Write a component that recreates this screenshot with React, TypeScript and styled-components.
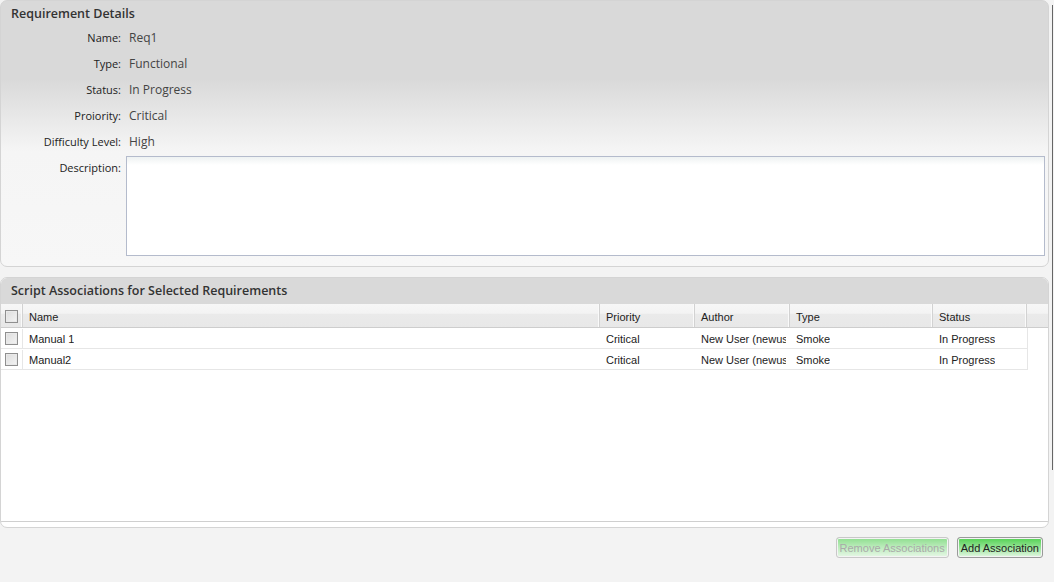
import { createGlobalStyle, styled } from 'styled-components';

const GlobalStyle = createGlobalStyle`
  html, body {
    margin: 0;
    padding: 0;
    background: #f3f3f3;
  }
  body {
    width: 1054px;
    height: 582px;
    overflow: hidden;
  }
`;

interface FieldRow {
  label: string;
  value: string;
}

interface Script {
  name: string;
  priority: string;
  author: string;
  type: string;
  status: string;
}

const fields: FieldRow[] = [
  { label: 'Name:', value: 'Req1' },
  { label: 'Type:', value: 'Functional' },
  { label: 'Status:', value: 'In Progress' },
  { label: 'Proiority:', value: 'Critical' },
  { label: 'Difficulty Level:', value: 'High' },
];

const scripts: Script[] = [
  { name: 'Manual 1', priority: 'Critical', author: 'New User (newuser)', type: 'Smoke', status: 'In Progress' },
  { name: 'Manual2', priority: 'Critical', author: 'New User (newuser)', type: 'Smoke', status: 'In Progress' },
];

const COLUMNS = '22px 577px 95px 95px 143px 94px 1fr';

const App = () => (
  <Page>
    <GlobalStyle />
    <DetailsPanel>
      <PanelTitle>Requirement Details</PanelTitle>
      <Form>
        {fields.map((f) => (
          <FormRow key={f.label}>
            <Label>{f.label}</Label>
            <Value>{f.value}</Value>
          </FormRow>
        ))}
        <DescriptionRow>
          <Label $top>Description:</Label>
          <Description />
        </DescriptionRow>
      </Form>
    </DetailsPanel>

    <GridPanel>
      <GridTitle>Script Associations for Selected Requirements</GridTitle>
      <Grid>
        <HeaderRow>
          <HeaderCell $check>
            <Checkbox />
          </HeaderCell>
          <HeaderCell>Name</HeaderCell>
          <HeaderCell>Priority</HeaderCell>
          <HeaderCell>Author</HeaderCell>
          <HeaderCell>Type</HeaderCell>
          <HeaderCell>Status</HeaderCell>
          <HeaderCell $last />
        </HeaderRow>
        {scripts.map((s) => (
          <BodyRow key={s.name}>
            <Cell $check>
              <Checkbox />
            </Cell>
            {[s.name, s.priority, s.author, s.type, s.status].map((text, i) => (
              <Cell key={i}>
                <CellText>{text}</CellText>
              </Cell>
            ))}
          </BodyRow>
        ))}
      </Grid>
    </GridPanel>

    <Actions>
      <Button disabled>Remove Associations</Button>
      <Button>Add Association</Button>
    </Actions>
    <ScrollEdge />
  </Page>
);

const Page = styled.div`
  width: 1049px;
  display: flex;
  flex-direction: column;
  font-family: 'Open Sans', 'Liberation Sans', sans-serif;
`;

const DetailsPanel = styled.section`
  height: 267px;
  box-sizing: border-box;
  border: 1px solid #d4d4d4;
  border-radius: 7px;
  background: linear-gradient(#d9d9d9 0px, #d9d9d9 78px, #f5f5f5 150px, #f7f7f7 100%);
  padding: 0 3px 10px 0;
  display: flex;
  flex-direction: column;
`;

const PanelTitle = styled.h2`
  margin: 0;
  height: 23px;
  line-height: 25px;
  padding-left: 10px;
  font-size: 12.5px;
  font-weight: 600;
  color: #333;
`;

const Form = styled.div`
  display: flex;
  flex-direction: column;
`;

const FormRow = styled.div`
  display: grid;
  grid-template-columns: 120px 1fr;
  column-gap: 5px;
  height: 26px;
  align-items: center;
`;

const Label = styled.span<{ $top?: boolean }>`
  text-align: right;
  font-size: 11px;
  color: #222;
  align-self: ${({ $top }) => ($top ? 'start' : 'center')};
  padding-top: ${({ $top }) => ($top ? '4px' : '0')};
`;

const Value = styled.span`
  padding-left: 3px;
  font-size: 12px;
  color: #444;
`;

const DescriptionRow = styled.div`
  display: grid;
  grid-template-columns: 120px 1fr;
  column-gap: 5px;
  margin-top: 2px;
`;

const Description = styled.div`
  height: 98px;
  border: 1px solid #b4bbcc;
  background: linear-gradient(#eef2f2 0px, #ffffff 8px);
`;

const GridPanel = styled.section`
  margin-top: 10px;
  height: 251px;
  box-sizing: border-box;
  border: 1px solid #d4d4d4;
  border-radius: 7px;
  overflow: hidden;
  background: #fff;
  display: flex;
  flex-direction: column;
  padding-bottom: 5px;
`;

const GridTitle = styled.h2`
  margin: 0;
  height: 26px;
  line-height: 25px;
  padding-left: 10px;
  background: #d9d9d9;
  font-size: 12.5px;
  font-weight: 600;
  color: #333;
  flex: none;
`;

const Grid = styled.div`
  flex: 1;
  border-bottom: 1px solid #cfcfcf;
  font-family: 'Liberation Sans', Arial, sans-serif;
  font-size: 11px;
  color: #222;
`;

const HeaderRow = styled.div`
  display: grid;
  grid-template-columns: ${COLUMNS};
  height: 24px;
  box-sizing: border-box;
  padding-top: 2px;
  border-bottom: 1px solid #cdcdcd;
  background: linear-gradient(#f7f7f7 0%, #f3f3f3 40%, #eaeaea 45%, #e8e8e8 100%);
`;

const HeaderCell = styled.div<{ $check?: boolean; $last?: boolean }>`
  display: flex;
  align-items: center;
  justify-content: ${({ $check }) => ($check ? 'center' : 'flex-start')};
  padding-left: ${({ $check }) => ($check ? '0' : '6px')};
  margin-top: -2px;
  padding-top: 2px;
  border-right: ${({ $last }) => ($last ? 'none' : '1px solid #d2d2d2')};
  box-shadow: ${({ $last }) => ($last ? 'none' : 'inset -1px 0 0 #fafafa')};
  overflow: hidden;
  white-space: nowrap;
`;

const BodyRow = styled.div`
  display: grid;
  grid-template-columns: 22px 577px 95px 95px 143px 94px;
  width: 1027px;
  height: 21px;
  box-sizing: border-box;
  padding-top: 1px;
  border-bottom: 1px solid #e6e6e6;
  border-right: 1px solid #e6e6e6;
`;

const Cell = styled.div<{ $check?: boolean }>`
  display: flex;
  align-items: center;
  justify-content: ${({ $check }) => ($check ? 'center' : 'flex-start')};
  padding-left: ${({ $check }) => ($check ? '0' : '6px')};
  padding-right: ${({ $check }) => ($check ? '0' : '4px')};
  border-right: ${({ $check }) => ($check ? '1px solid #e6e6e6' : 'none')};
  min-width: 0;
`;

const CellText = styled.span`
  display: block;
  overflow: hidden;
  white-space: nowrap;
  min-width: 0;
`;

const Checkbox = styled.span`
  width: 11px;
  height: 11px;
  border: 1px solid #8f8f8f;
  background: linear-gradient(135deg, #dcdcdc, #f4f4f4);
  box-shadow: inset 0 0 0 1px #e9e9e9;
`;

const Actions = styled.div`
  display: flex;
  justify-content: flex-end;
  gap: 8px;
  padding: 9px 6px 0 0;
`;

const Button = styled.button`
  height: 21px;
  padding: 0 3px;
  border-radius: 3px;
  border: 1px solid ${({ disabled }) => (disabled ? '#c8c8c8' : '#9a9a9a')};
  background: ${({ disabled }) =>
    disabled
      ? 'linear-gradient(#8ede8e 0%, #b9ebb9 45%, #e6f7e6 100%)'
      : 'linear-gradient(#52d152 0%, #8fe28f 45%, #e4f7e4 100%)'};
  box-shadow: inset 0 0 0 1px #f4f4f4;
  font-family: 'Liberation Sans', Arial, sans-serif;
  font-size: 11px;
  color: ${({ disabled }) => (disabled ? '#a9a9a9' : '#222')};
`;

const ScrollEdge = styled.div`
  position: fixed;
  top: 5px;
  right: 1px;
  width: 1px;
  height: 465px;
  background: #666;
`;

export default App;
